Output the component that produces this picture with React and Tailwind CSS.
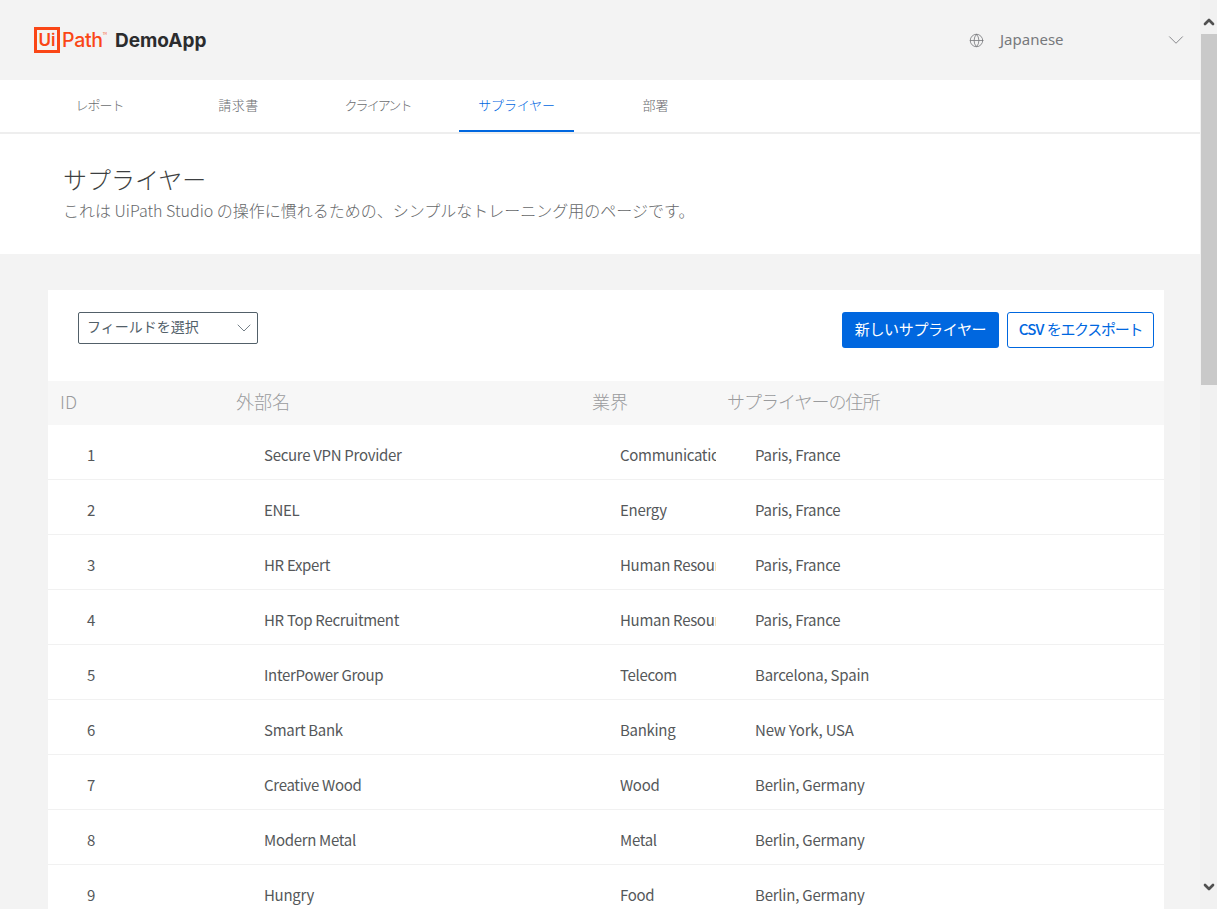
import React from 'react';
import { ChevronDown, ChevronUp, Globe } from 'lucide-react';

const JP = { fontFamily: '"Noto Sans CJK JP", "Noto Sans", sans-serif' };

const tabs = [
  { label: 'レポート', cls: 'tracking-[-1px]' },
  { label: '請求書', cls: 'tracking-[0.5px]' },
  { label: 'クライアント', cls: 'tracking-[-1.9px]' },
  { label: 'サプライヤー', cls: 'tracking-[-0.2px]' },
  { label: '部署', cls: '' },
];

const suppliers = [
  [1, 'Secure VPN Provider', 'Communications', 'Paris, France'],
  [2, 'ENEL', 'Energy', 'Paris, France'],
  [3, 'HR Expert', 'Human Resources', 'Paris, France'],
  [4, 'HR Top Recruitment', 'Human Resources', 'Paris, France'],
  [5, 'InterPower Group', 'Telecom', 'Barcelona, Spain'],
  [6, 'Smart Bank', 'Banking', 'New York, USA'],
  [7, 'Creative Wood', 'Wood', 'Berlin, Germany'],
  [8, 'Modern Metal', 'Metal', 'Berlin, Germany'],
  [9, 'Hungry', 'Food', 'Berlin, Germany'],
];

const Logo = () => (
  <div className="flex items-center text-[#fa4616]">
    <div className="flex h-[26px] w-[26px] items-center justify-center border-[3px] border-[#fa4616]">
      <span className="font-['Inter'] text-[17px] font-semibold leading-none">Ui</span>
    </div>
    <span className="ml-[2px] pt-[1px] font-['Inter'] text-[19.5px] font-medium leading-none tracking-[-0.3px]">Path</span>
    <span className="mb-3 text-[3px] leading-none">TM</span>
  </div>
);

const Header = () => (
  <header className="flex h-20 items-center bg-[#f3f3f3]">
    <div className="ml-[34px] flex items-center">
      <Logo />
      <span className="ml-[8px] pt-[3px] font-['Inter'] text-[19px] font-bold text-[#2b2c2e]">DemoApp</span>
    </div>
    <div className="ml-auto flex w-[231px] items-center text-[#77797c]">
      <Globe size={15} strokeWidth={1.3} />
      <span className="ml-[16px] pb-[2px] font-['Noto_Sans'] text-[15px]">Japanese</span>
      <ChevronDown size={26} strokeWidth={0.8} className="ml-auto mr-[11px]" />
    </div>
  </header>
);

const Nav = () => (
  <nav className="flex h-[54px] gap-6 border-b-2 border-[#eeeeee] bg-white pl-[42px] text-[13px] font-light text-[#6b6d70]">
    {tabs.map((t) => {
      const active = t.label === 'サプライヤー';
      return (
        <div
          key={t.label}
          className={`flex h-[52px] w-[115px] items-center justify-center border-b-2 ${t.cls} ${active ? 'border-[#0067df] text-[#0067df]' : 'border-transparent'}`}
        >
          {t.label}
        </div>
      );
    })}
  </nav>
);

const Toolbar = () => (
  <div className="flex h-[91px] items-start justify-between pl-[30px] pr-[10px] pt-[22px]">
    <div className="flex h-8 w-[180px] items-center justify-between rounded-[2px] border border-[#526069] pl-2 pr-[1px] text-sm text-[#526069]">
      <span className="pb-1">フィールドを選択</span>
      <ChevronDown size={24} strokeWidth={0.8} />
    </div>
    <div className="flex gap-2">
      <button className="h-9 w-[157px] rounded-[3px] bg-[#0067df] pb-[2px] text-[15px] tracking-[-0.35px] text-white">新しいサプライヤー</button>
      <button className="h-9 w-[147px] rounded-[3px] border border-[#0067df] bg-white pb-[2px] text-[15px] text-[#0067df]">
        <span className="mr-[3px] text-[15px] font-medium tracking-[-0.8px]">CSV</span>
        <span className="tracking-[-1.3px]">をエクスポート</span>
      </button>
    </div>
  </div>
);

const SupplierTable = () => (
  <div>
    <div className="flex h-[44px] items-center bg-[#f7f7f7] pb-1 text-[18px] font-light text-[#9a9b9d]">
      <div className="w-[188px] pl-3">ID</div>
      <div className="w-[356px]">外部名</div>
      <div className="w-[135px]">業界</div>
      <div className="tracking-[-1px]">サプライヤーの住所</div>
    </div>
    {suppliers.map(([id, name, sector, address]) => (
      <div key={id} className="flex h-[55px] items-center border-b border-[#f1f1f1] pt-[6px] text-[15px] tracking-[-0.22px] text-[#55585a]">
        <div className="w-[216px] pl-[39px]">{id}</div>
        <div className="w-[356px] tracking-[-0.3px]">{name}</div>
        <div className="w-[135px] pr-[39px]">
          <div className="overflow-hidden whitespace-nowrap tracking-[-0.3px]">{sector}</div>
        </div>
        <div>{address}</div>
      </div>
    ))}
  </div>
);

const Scrollbar = () => (
  <div className="flex h-full w-[17px] flex-col bg-[#f1f1f1] text-[#505050]">
    <div className="flex h-[34px] items-center justify-center pt-[10px]">
      <ChevronUp size={16} strokeWidth={4} />
    </div>
    <div className="ml-[1px] h-[351px] bg-[#c9c9c9]" />
    <div className="mt-auto flex h-[34px] items-center justify-center pb-[10px]">
      <ChevronDown size={16} strokeWidth={4} />
    </div>
  </div>
);

export default function App() {
  return (
    <div className="flex h-[909px] w-full overflow-hidden bg-[#f3f3f3]" style={JP}>
      <main className="min-w-0 flex-1 overflow-hidden">
        <Header />
        <Nav />
        <section className="h-[120px] bg-white pl-[63px] pt-[29px]">
          <h1 className="text-[24px] font-light leading-[32px] text-[#3d3f41]">サプライヤー</h1>
          <p className="mt-[3px] text-base font-light leading-[24px] text-[#66686a]">
            これは UiPath Studio の操作に慣れるための、シンプルなトレーニング用のページです。
          </p>
        </section>
        <section className="ml-[48px] mr-[36px] mt-[36px] bg-white">
          <Toolbar />
          <SupplierTable />
        </section>
      </main>
      <Scrollbar />
    </div>
  );
}
